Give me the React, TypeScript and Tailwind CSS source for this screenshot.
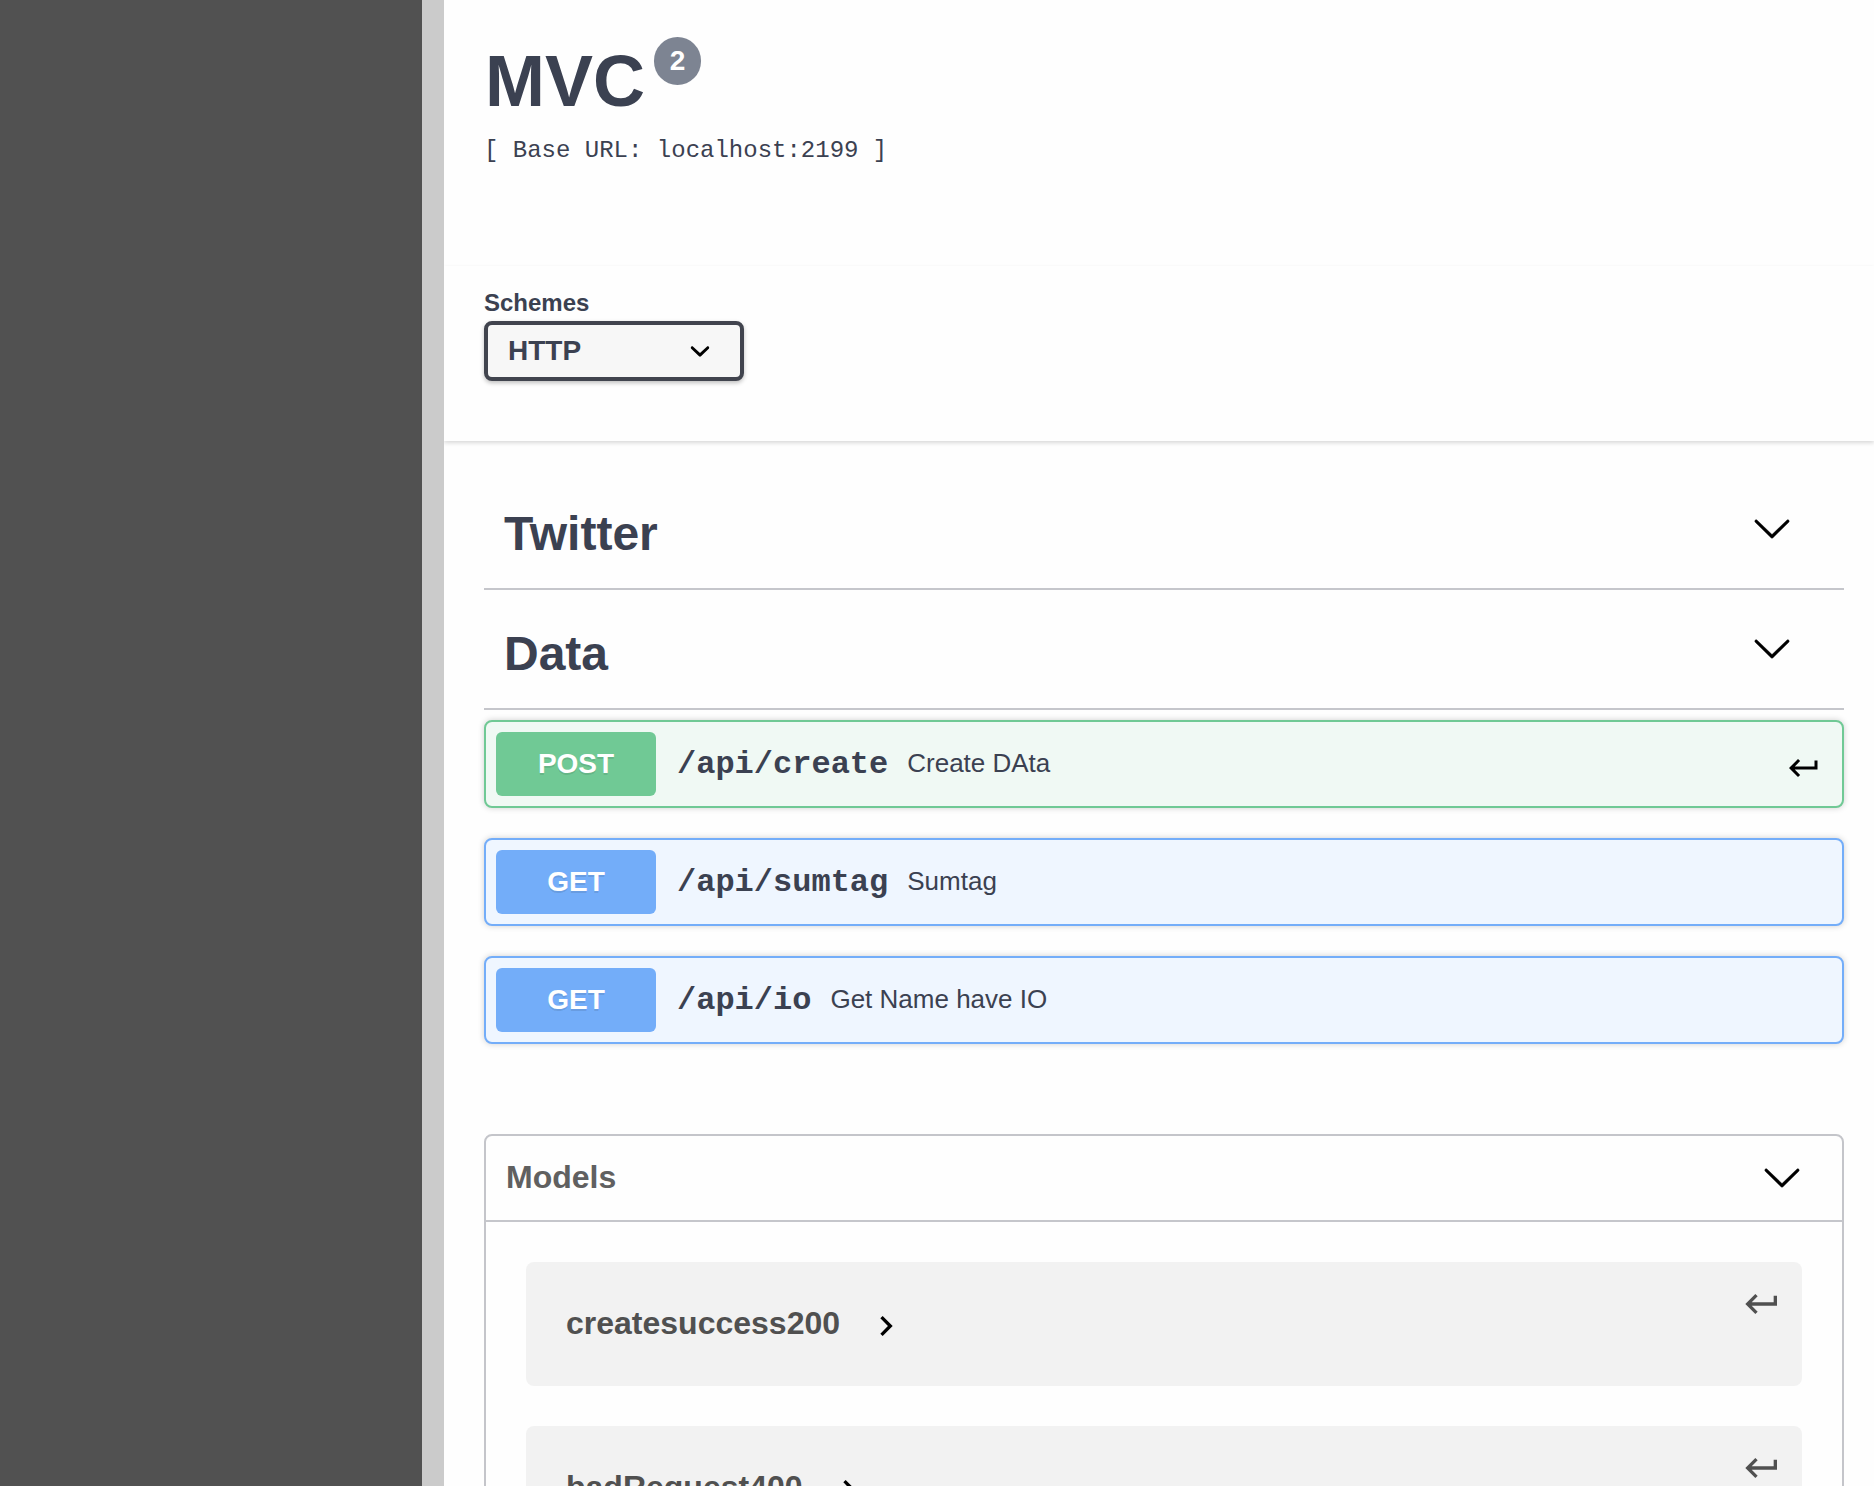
type IconProps = { className?: string };

const LargeArrowDown = ({ className = "" }: IconProps) => (
  <svg viewBox="0 0 20 20" className={`size-10 shrink-0 ${className}`} fill="#000" stroke="#000" strokeWidth="0.2">
    <path d="M17.418 6.109c.272-.268.709-.268.979 0s.271.701 0 .969l-7.908 7.83c-.27.268-.707.268-.979 0l-7.908-7.83c-.27-.268-.27-.701 0-.969.271-.268.709-.268.979 0L10 13.25l7.418-7.141z" />
  </svg>
);

const SelectArrow = () => (
  <svg viewBox="0 0 20 20" className="size-10 shrink-0" fill="#000">
    <path d="M13.418 7.859c.271-.268.709-.268.978 0 .27.268.272.701 0 .969l-3.908 3.83c-.27.268-.707.268-.979 0l-3.908-3.83c-.27-.267-.27-.701 0-.969.271-.268.709-.268.978 0L10 11l3.418-3.141z" />
  </svg>
);

const JumpTo = ({ className = "" }: IconProps) => (
  <svg viewBox="0 0 24 24" className={`shrink-0 ${className}`} fill="currentColor">
    <path d="M19 7v4H5.83l3.58-3.59L8 6l-6 6 6 6 1.41-1.41L5.83 13H21V7z" />
  </svg>
);

const ChevronRight = ({ className = "" }: IconProps) => (
  <svg viewBox="0 0 24 24" className={`size-10 shrink-0 ${className}`} fill="#000">
    <path d="M10 6L8.59 7.41 13.17 12l-4.58 4.59L10 18l6-6z" />
  </svg>
);

function TagHeader({ name }: { name: string }) {
  return (
    <div className="flex h-[120px] items-start justify-between border-b-2 border-[#c5c6cb] pl-5 pr-[52px]">
      <h2 className="mt-9 text-[48px] font-bold leading-[56px]">{name}</h2>
      <LargeArrowDown className="mt-[38px]" />
    </div>
  );
}

type Operation = { method: "POST" | "GET"; path: string; summary: string; jump?: boolean };

const operations: Operation[] = [
  { method: "POST", path: "/api/create", summary: "Create DAta", jump: true },
  { method: "GET", path: "/api/sumtag", summary: "Sumtag" },
  { method: "GET", path: "/api/io", summary: "Get Name have IO" },
];

const tones = {
  POST: { block: "border-[#70c995] bg-[#f0f9f4]", badge: "bg-[#70c995]" },
  GET: { block: "border-[#73adf9] bg-[#eff6ff]", badge: "bg-[#73adf9]" },
};

function OperationRow({ method, path, summary, jump }: Operation) {
  const tone = tones[method];
  return (
    <div
      className={`flex h-[88px] items-center rounded-lg border-2 pl-[10px] pr-5 shadow-[0_0_6px_rgba(0,0,0,0.19)] ${tone.block}`}
    >
      <span
        className={`flex h-16 w-40 items-center justify-center rounded-md text-[28px] font-bold leading-8 text-white [text-shadow:0_2px_0_rgba(0,0,0,0.1)] ${tone.badge}`}
      >
        {method}
      </span>
      <span className="ml-[21px] pt-[2px] font-['Liberation_Mono',monospace] text-[32px] font-bold leading-9">{path}</span>
      <span className="ml-[19px] pb-[2px] text-[26px] leading-[30px]">{summary}</span>
      {jump && <JumpTo className="ml-auto mt-2 size-9 text-black" />}
    </div>
  );
}

function ModelCard({ name }: { name: string }) {
  return (
    <div className="flex h-[124px] items-start rounded-lg bg-[#f2f2f2] pl-10 pr-5 text-[#505050]">
      <span className="mt-[43px] text-[32px] font-bold leading-9">{name}</span>
      <ChevronRight className="ml-[26px] mt-11" />
      <JumpTo className="ml-auto mt-[22px] size-10" />
    </div>
  );
}

export default function App() {
  return (
    <div className="flex h-[1486px] w-[1874px] overflow-hidden bg-[#fefefe] font-['Liberation_Sans',Arial,sans-serif] text-[#3b4151]">
      <aside className="w-[422px] shrink-0 bg-[#515151]" />
      <div className="w-[22px] shrink-0 bg-[#cbcbcb]" />
      <main className="flex min-w-0 flex-1 flex-col overflow-hidden">
        <header className="h-[266px] shrink-0 pl-10">
          <div className="flex items-start pt-[37px]">
            <h1 className="ml-px mt-1 text-[72px] font-bold leading-[80px]">MVC</h1>
            <span className="ml-[9px] flex h-12 w-[47px] items-center justify-center rounded-full bg-[#7d8492] text-[28px] font-bold leading-8 text-white">
              2
            </span>
          </div>
          <pre className="mt-4 font-['Liberation_Mono',monospace] text-[24px] leading-7">
            [ Base URL: localhost:2199 ]
          </pre>
        </header>

        <section className="h-[175px] shrink-0 bg-[#fefefe] pl-10 pt-[23px] shadow-[0_2px_4px_rgba(0,0,0,0.15)]">
          <div className="text-[24px] font-bold leading-7">Schemes</div>
          <div className="mt-[4px] flex h-[60px] w-[260px] items-center justify-between rounded-lg border-4 border-[#41444e] bg-[#f7f7f7] pl-5 pr-5 shadow-[0_2px_4px_rgba(0,0,0,0.25)]">
            <span className="text-[28px] font-bold leading-8">HTTP</span>
            <SelectArrow />
          </div>
        </section>

        <section className="shrink-0 pl-10 pr-[30px] pt-[29px]">
          <TagHeader name="Twitter" />
          <TagHeader name="Data" />
          <div className="mt-[10px] flex flex-col gap-[30px]">
            {operations.map((op) => (
              <OperationRow key={op.path} {...op} />
            ))}
          </div>
        </section>

        <section className="ml-10 mr-[30px] mt-[90px] shrink-0 rounded-lg border-2 border-[#c4c5ca]">
          <div className="flex h-[86px] items-start justify-between border-b-2 border-[#c5c6cb] pl-5 pr-10">
            <h3 className="mt-[23px] text-[32px] font-bold leading-9 text-[#606060]">Models</h3>
            <LargeArrowDown className="mt-[21px]" />
          </div>
          <div className="flex flex-col gap-10 px-10 py-10">
            <ModelCard name="createsuccess200" />
            <ModelCard name="badRequest400" />
          </div>
        </section>
      </main>
    </div>
  );
}
